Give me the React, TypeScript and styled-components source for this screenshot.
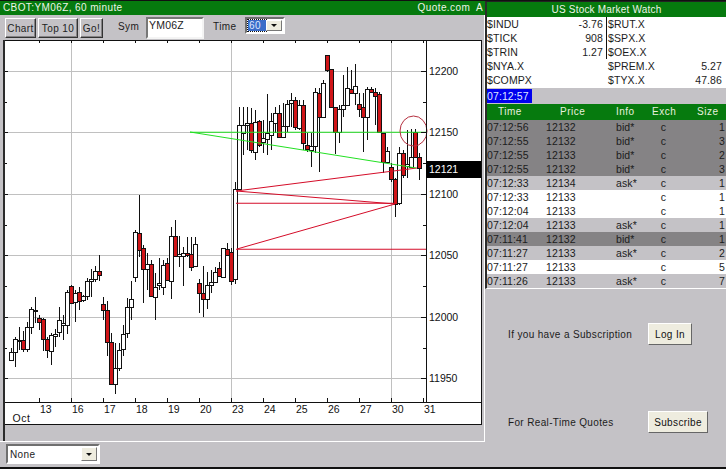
import styled, {createGlobalStyle} from 'styled-components';

type Candle = [number, number, number, number, 0 | 1];

// high, body top, body bottom, low (page y), red
const candles: Candle[] = [
  [348, 352, 360, 360, 0], [337, 339, 352, 367, 0], [327, 340, 341, 350, 0], [331, 340, 349, 352, 1],
  [322, 327, 349, 352, 0], [307, 309, 327, 334, 0], [297, 310, 311, 323, 0], [315, 318, 322, 330, 1],
  [318, 319, 339, 351, 1], [337, 339, 350, 358, 1], [333, 335, 351, 365, 0], [329, 334, 336, 347, 0],
  [307, 320, 332, 337, 0], [315, 323, 325, 340, 0], [290, 292, 325, 334, 0], [285, 286, 303, 304, 1],
  [290, 293, 302, 322, 0], [287, 292, 301, 310, 1], [295, 296, 300, 302, 0], [278, 281, 296, 300, 0],
  [269, 279, 281, 297, 0], [266, 271, 279, 282, 0], [255, 271, 275, 281, 1], [297, 304, 310, 320, 1],
  [301, 310, 342, 356, 1], [333, 342, 384, 384, 1], [343, 368, 384, 394, 0], [343, 350, 368, 371, 0],
  [325, 334, 349, 356, 0], [298, 307, 333, 338, 0], [281, 299, 307, 320, 0], [230, 232, 277, 282, 0],
  [195, 233, 250, 257, 1], [245, 248, 269, 303, 1], [253, 264, 269, 290, 0], [260, 264, 296, 296, 1],
  [273, 287, 297, 320, 0], [258, 283, 285, 290, 0], [260, 265, 287, 295, 0], [258, 263, 280, 281, 1],
  [227, 236, 281, 299, 0], [220, 236, 256, 257, 1], [236, 254, 256, 267, 0], [247, 253, 256, 286, 0],
  [237, 253, 255, 257, 1], [237, 254, 267, 271, 1], [237, 244, 266, 267, 0], [279, 283, 293, 313, 1],
  [266, 293, 299, 317, 1], [272, 285, 299, 309, 0], [270, 282, 285, 293, 0], [267, 272, 282, 283, 0],
  [262, 268, 276, 277, 1], [248, 248, 277, 278, 0], [243, 249, 255, 256, 1], [248, 252, 281, 285, 1],
  [182, 189, 279, 284, 0], [107, 125, 189, 189, 0], [107, 125, 133, 155, 0], [107, 123, 125, 150, 0],
  [108, 123, 150, 153, 1], [110, 122, 152, 160, 0], [120, 121, 145, 147, 1], [120, 138, 142, 153, 0],
  [94, 133, 139, 155, 0], [113, 121, 135, 150, 0], [107, 113, 123, 133, 0], [105, 113, 137, 138, 1],
  [103, 126, 137, 138, 0], [100, 104, 126, 132, 0], [93, 100, 103, 127, 0], [97, 100, 127, 130, 1],
  [100, 105, 128, 130, 0], [100, 105, 143, 150, 1], [133, 145, 149, 152, 1], [133, 146, 150, 167, 0],
  [88, 92, 146, 153, 0], [88, 93, 117, 172, 1], [80, 83, 117, 118, 0], [55, 55, 70, 72, 1],
  [69, 69, 107, 108, 1], [107, 107, 132, 154, 1], [105, 109, 132, 143, 0], [75, 105, 109, 117, 0],
  [67, 88, 105, 105, 0], [70, 89, 93, 93, 1], [64, 86, 93, 105, 0], [93, 104, 109, 117, 1],
  [93, 107, 117, 152, 1], [87, 89, 117, 140, 0], [87, 89, 92, 93, 1], [88, 92, 96, 125, 1],
  [92, 94, 132, 133, 1], [133, 133, 162, 173, 1], [147, 151, 162, 163, 0], [163, 167, 179, 182, 1],
  [178, 179, 204, 217, 1], [147, 153, 203, 205, 0], [150, 153, 175, 178, 1], [130, 164, 166, 178, 0],
  [129, 157, 167, 168, 0], [129, 132, 157, 158, 1], [153, 157, 168, 180, 1],
];

const priceLevels = [
  {label: '12200', y: 71},
  {label: '12150', y: 132},
  {label: '12100', y: 194},
  {label: '12050', y: 255},
  {label: '12000', y: 317},
  {label: '11950', y: 378},
];

const dayLabels = ['13', '16', '17', '18', '19', '20', '23', '24', '25', '26', '27', '30', '31'];

const watchRows = [
  {a: '$INDU', av: '-3.76', b: '$RUT.X', bv: '', divided: true},
  {a: '$TICK', av: '908', b: '$SPX.X', bv: '', divided: true},
  {a: '$TRIN', av: '1.27', b: '$OEX.X', bv: '', divided: true},
  {a: '$NYA.X', av: '', b: '$PREM.X', bv: '5.27', divided: false},
  {a: '$COMPX', av: '', b: '$TYX.X', bv: '47.86', divided: false},
];

type Tone = 'bid' | 'ask' | 'plain';

const trades: {time: string; price: string; info: string; size: string; tone: Tone}[] = [
  {time: '07:12:56', price: '12132', info: 'bid*', size: '1', tone: 'bid'},
  {time: '07:12:55', price: '12132', info: 'bid*', size: '3', tone: 'bid'},
  {time: '07:12:55', price: '12133', info: 'bid*', size: '2', tone: 'bid'},
  {time: '07:12:55', price: '12132', info: 'bid*', size: '3', tone: 'bid'},
  {time: '07:12:33', price: '12134', info: 'ask*', size: '1', tone: 'ask'},
  {time: '07:12:33', price: '12133', info: '', size: '1', tone: 'plain'},
  {time: '07:12:04', price: '12133', info: '', size: '1', tone: 'plain'},
  {time: '07:12:04', price: '12133', info: 'ask*', size: '1', tone: 'ask'},
  {time: '07:11:41', price: '12132', info: 'bid*', size: '1', tone: 'bid'},
  {time: '07:11:27', price: '12133', info: 'ask*', size: '2', tone: 'ask'},
  {time: '07:11:27', price: '12133', info: '', size: '5', tone: 'plain'},
  {time: '07:11:26', price: '12133', info: 'ask*', size: '7', tone: 'ask'},
];

const toneColors: Record<Tone, string> = {
  bid: '#858385',
  ask: '#c4c2c6',
  plain: '#ffffff',
};

const GREEN = '#067a0e';
const GRAY = '#c4c2c6';
const FACE = '#eeecdf';
const RED_LINE = '#d40c28';
const GREEN_LINE = '#22e022';
const FONT = '"Liberation Sans", Arial, sans-serif';

const GlobalStyle = createGlobalStyle`
  html, body {
    margin: 0;
    padding: 0;
    background: ${GRAY};
  }
  * {
    box-sizing: border-box;
  }
`;

const Page = styled.div`
  display: flex;
  width: 726px;
  height: 469px;
  overflow: hidden;
  background: ${GRAY};
  border-top: 1px solid #111;
  border-bottom: 2px solid #111;
  font-family: ${FONT};
  font-size: 10.5px;
  color: #1c1c1c;
`;

const LeftPane = styled.div`
  display: flex;
  flex-direction: column;
  width: 485px;
  flex: none;
`;

const TitleBar = styled.div`
  display: flex;
  justify-content: space-between;
  height: 14px;
  padding: 0 2px 0 3px;
  background: ${GREEN};
  color: #eef5e8;
  font-size: 10px;
  line-height: 14px;
  letter-spacing: 0.4px;
`;

const Workspace = styled.div`
  height: 427px;
  border-right: 1px solid #fff;
  border-bottom: 1px solid #fff;
`;

const Toolbar = styled.div`
  display: flex;
  align-items: flex-start;
  height: 25px;
  padding: 2px 0 0 5px;
`;

const ToolButton = styled.button`
  height: 20px;
  margin: 1px 2px 0 0;
  padding: 0;
  width: ${({$width}: {$width: number}) => $width}px;
  background: ${GRAY};
  border: 1px solid;
  border-color: #fff #333 #333 #fff;
  box-shadow: inset -1px -1px 0 #858385;
  font-family: ${FONT};
  font-size: 10px;
  letter-spacing: 0.4px;
  color: #222;
`;

const ToolLabel = styled.span`
  width: ${({$width}: {$width: number}) => $width}px;
  margin-left: ${({$gap}: {$gap: number}) => $gap}px;
  font-size: 10px;
  line-height: 19px;
  letter-spacing: 0.4px;
`;

const SymbolInput = styled.div`
  width: 58px;
  height: 22px;
  padding-left: 1px;
  background: #fff;
  border: 2px solid;
  border-color: #777 #f4f4f4 #f4f4f4 #777;
  line-height: 13px;
  letter-spacing: 0.2px;
`;

const Select = styled.div`
  display: flex;
  align-items: center;
  justify-content: space-between;
  width: ${({$width}: {$width: number}) => $width}px;
  height: ${({$height}: {$height: number}) => $height}px;
  padding: 1px;
  background: #fff;
  border: 2px solid;
  border-color: #6f6f6f #fff #fff #6f6f6f;
  font-size: 10px;
  letter-spacing: 0.4px;
`;

const SelectedValue = styled.span`
  width: 19px;
  height: 11px;
  padding-left: 1px;
  background: #3a6cc8;
  outline: 1px dotted #111;
  color: #dfe8ff;
  line-height: 11px;
`;

const PlainValue = styled.span`
  padding-left: 1px;
`;

const DropButton = styled.span`
  display: flex;
  align-items: center;
  justify-content: center;
  width: 16px;
  height: 100%;
  background: ${FACE};
  border: 1px solid;
  border-color: #fff #777 #777 #fff;

  &::after {
    content: '';
    border-top: 3px solid #111;
    border-left: 3px solid transparent;
    border-right: 3px solid transparent;
  }
`;

const ChartColumn = styled.div`
  height: 401px;
  margin-left: 3px;
  border-left: 2px solid #2b2b2b;
`;

const ChartFrame = styled.div`
  width: 477px;
  height: 385px;
  background: #fff;
  border: 1px solid #111;
  border-left: none;
`;

const ChartSvg = styled.svg`
  display: block;
  font-family: ${FONT};
  font-size: 10.5px;
`;

const BottomBar = styled.div`
  flex: 1;
  padding: 2px 0 0 6px;
`;

const RightPane = styled.div`
  display: flex;
  flex-direction: column;
  flex: 1;
`;

const QuoteColumn = styled.div`
  height: 288px;
  border-top: 1px solid #222;
  border-left: 2px solid #2b2b2b;
  border-bottom: 1px solid #fff;
`;

const WatchHeader = styled.div`
  height: 15px;
  background: ${GREEN};
  color: #eef5e8;
  font-size: 10px;
  line-height: 15px;
  letter-spacing: 0.2px;
  text-align: center;
`;

const WatchTable = styled.div`
  background: #fff;
  border-bottom: 1px solid #fff;
`;

const WatchRow = styled.div`
  display: grid;
  grid-template-columns: 120px 1fr;
  height: 14px;
  line-height: 14px;
  letter-spacing: 0.1px;
`;

const WatchCell = styled.div`
  display: flex;
  justify-content: space-between;
  padding-right: 3px;
  padding-left: ${({$second}: {$second?: boolean}) => ($second ? 1 : 0)}px;
  border-right: 1px solid
    ${({$divided}: {$divided?: boolean}) => ($divided ? '#111' : 'transparent')};
`;

const ClockRow = styled.div`
  height: 16px;
  padding-top: 1px;
`;

const Clock = styled.div`
  width: 45px;
  height: 14px;
  background: #0000ee;
  color: #dfe6ff;
  line-height: 14px;
  letter-spacing: 0.1px;
`;

const TradeHeader = styled.div`
  display: grid;
  grid-template-columns: 59px 70px 35px 25px 1fr;
  height: 16px;
  background: ${GREEN};
  color: #e6f0de;
  font-size: 10px;
  line-height: 16px;
  letter-spacing: 0.5px;
`;

const HeaderCell = styled.div`
  padding-left: ${({$indent}: {$indent: number}) => $indent}px;
  white-space: nowrap;
`;

const TradeRow = styled.div`
  display: grid;
  grid-template-columns: 59px 70px 35px 25px 1fr;
  height: 14px;
  padding-right: 1px;
  background: ${({$tone}: {$tone: Tone}) => toneColors[$tone]};
  line-height: 14px;
  letter-spacing: 0.1px;
`;

const CenterCell = styled.div`
  text-align: center;
`;

const RightCell = styled.div`
  text-align: right;
`;

const AccountPanel = styled.div`
  display: flex;
  flex-direction: column;
  gap: 66px;
  padding: 34px 0 0 23px;
`;

const AccountRow = styled.div`
  display: grid;
  grid-template-columns: 140px auto;
  justify-content: start;
  align-items: center;
  font-size: 10px;
  letter-spacing: 0.35px;
`;

const FaceButton = styled.button`
  width: ${({$width}: {$width: number}) => $width}px;
  height: 22px;
  padding: 0;
  background: ${FACE};
  border: 1px solid;
  border-color: #fff #666 #666 #fff;
  font-family: ${FONT};
  font-size: 10px;
  letter-spacing: 0.35px;
  color: #111;
`;

const CandleMark = ({candle, index}: {candle: Candle; index: number}) => {
  const [high, top, bottom, low, red] = candle;
  const x = 11.5 + index * 4;
  return (
    <g shapeRendering="crispEdges">
      <line x1={x} x2={x} y1={high} y2={low} stroke="#111" />
      <rect
        x={x - 2}
        y={top + 0.5}
        width={4}
        height={Math.max(bottom - top, 1)}
        fill={red ? '#d01518' : '#fff'}
        stroke="#111"
      />
    </g>
  );
};

const Chart = () => (
  <ChartSvg width={476} height={383} viewBox="5 41 476 383">
    {priceLevels.map((level) => (
      <line
        key={level.y}
        x1={5}
        x2={426}
        y1={level.y + 0.5}
        y2={level.y + 0.5}
        stroke="#c0c0c0"
      />
    ))}
    {[71.5, 231.5, 391.5].map((x) => (
      <line key={x} x1={x} x2={x} y1={41} y2={402} stroke="#c0c0c0" />
    ))}
    {candles.map((candle, index) => (
      <CandleMark key={index} candle={candle} index={index} />
    ))}

    <g fill="none" strokeWidth={1}>
      <path d="M236 191 L417 168" stroke={RED_LINE} />
      <path d="M236 191 L395 204" stroke={RED_LINE} />
      <path d="M236 203.2 H395" stroke={RED_LINE} strokeWidth={1.15} />
      <path d="M237 249 L395 204" stroke={RED_LINE} />
      <path d="M236 249.2 H426" stroke={RED_LINE} strokeWidth={1.15} />
      <path d="M190 132.2 H426" stroke={GREEN_LINE} strokeWidth={1.15} />
      <path d="M190 132 L416 168" stroke={GREEN_LINE} />
      <ellipse cx={413.5} cy={131} rx={13.5} ry={15} stroke="#b5303f" />
    </g>

    <g stroke="#111" shapeRendering="crispEdges">
      <line x1={426.5} x2={426.5} y1={41} y2={402} />
      <line x1={5} x2={481} y1={402.5} y2={402.5} />
      {priceLevels.map((level) => (
        <g key={level.y}>
          <line x1={421} x2={426} y1={level.y + 0.5} y2={level.y + 0.5} />
          <line x1={5} x2={8} y1={level.y + 0.5} y2={level.y + 0.5} />
        </g>
      ))}
      {priceLevels.slice(0, 5).map((level) => (
        <g key={level.y}>
          <line x1={423} x2={426} y1={level.y + 31.5} y2={level.y + 31.5} />
          <line x1={5} x2={7} y1={level.y + 31.5} y2={level.y + 31.5} />
        </g>
      ))}
      {dayLabels.map((day, index) => (
        <g key={day}>
          <line x1={39.5 + index * 32} x2={39.5 + index * 32} y1={398} y2={402} />
          <line x1={39.5 + index * 32} x2={39.5 + index * 32} y1={41} y2={43} />
        </g>
      ))}
    </g>

    <g fill="#111">
      {priceLevels.map((level) => (
        <text key={level.label} x={429} y={level.y + 4}>
          {level.label}
        </text>
      ))}
      {dayLabels.map((day, index) => (
        <text key={day} x={40 + index * 32} y={413}>
          {day}
        </text>
      ))}
      <text x={12.5} y={422} letterSpacing={0.6}>
        Oct
      </text>
    </g>

    <rect x={426} y={161} width={55} height={17} fill="#000" />
    <text x={429} y={173} fill="#fff">
      12121
    </text>
  </ChartSvg>
);

export default function App(): JSX.Element {
  return (
    <Page>
      <GlobalStyle />
      <LeftPane>
        <TitleBar>
          <span>CBOT:YM06Z, 60 minute</span>
          <span>Quote.com&nbsp; A</span>
        </TitleBar>
        <Workspace>
          <Toolbar>
            <ToolButton $width={31}>Chart</ToolButton>
            <ToolButton $width={40}>Top 10</ToolButton>
            <ToolButton $width={23}>Go!</ToolButton>
            <ToolLabel $width={28} $gap={13}>Sym</ToolLabel>
            <SymbolInput>YM06Z</SymbolInput>
            <ToolLabel $width={32} $gap={9}>Time</ToolLabel>
            <Select $width={40} $height={17}>
              <SelectedValue>60</SelectedValue>
              <DropButton />
            </Select>
          </Toolbar>
          <ChartColumn>
            <ChartFrame>
              <Chart />
            </ChartFrame>
          </ChartColumn>
        </Workspace>
        <BottomBar>
          <Select $width={94} $height={20}>
            <PlainValue>None</PlainValue>
            <DropButton />
          </Select>
        </BottomBar>
      </LeftPane>

      <RightPane>
        <QuoteColumn>
          <WatchHeader>US Stock Market Watch</WatchHeader>
          <WatchTable>
            {watchRows.map((row) => (
              <WatchRow key={row.a}>
                <WatchCell $divided={row.divided}>
                  <span>{row.a}</span>
                  <span>{row.av}</span>
                </WatchCell>
                <WatchCell $second>
                  <span>{row.b}</span>
                  <span>{row.bv}</span>
                </WatchCell>
              </WatchRow>
            ))}
          </WatchTable>
          <ClockRow>
            <Clock>07:12:57</Clock>
          </ClockRow>
          <TradeHeader>
            <HeaderCell $indent={11}>Time</HeaderCell>
            <HeaderCell $indent={14}>Price</HeaderCell>
            <HeaderCell $indent={0}>Info</HeaderCell>
            <HeaderCell $indent={1}>Exch</HeaderCell>
            <HeaderCell $indent={21}>Size</HeaderCell>
          </TradeHeader>
          {trades.map((trade, index) => (
            <TradeRow key={index} $tone={trade.tone}>
              <div>{trade.time}</div>
              <div>{trade.price}</div>
              <div>{trade.info}</div>
              <CenterCell>c</CenterCell>
              <RightCell>{trade.size}</RightCell>
            </TradeRow>
          ))}
        </QuoteColumn>
        <AccountPanel>
          <AccountRow>
            <span>If you have a Subscription</span>
            <FaceButton $width={44}>Log In</FaceButton>
          </AccountRow>
          <AccountRow>
            <span>For Real-Time Quotes</span>
            <FaceButton $width={60}>Subscribe</FaceButton>
          </AccountRow>
        </AccountPanel>
      </RightPane>
    </Page>
  );
}
